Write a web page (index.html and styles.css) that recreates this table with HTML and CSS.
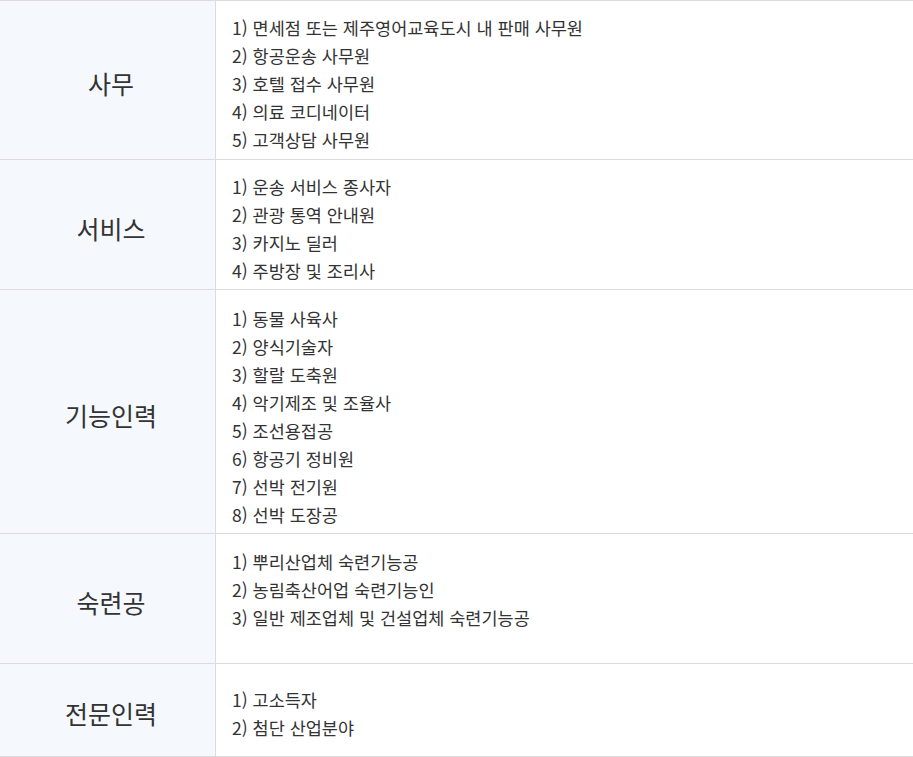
FILE: index.html
```html
<!DOCTYPE html>
<html lang="ko">
<head>
<meta charset="utf-8">
<title>직종</title>
<link rel="stylesheet" href="styles.css">
</head>
<body>
<div class="table">
  <div class="row">
    <div class="head">사무</div>
    <ul class="list list--first">
      <li>1) 면세점 또는 제주영어교육도시 내 판매 사무원</li>
      <li>2) 항공운송 사무원</li>
      <li>3) 호텔 접수 사무원</li>
      <li>4) 의료 코디네이터</li>
      <li>5) 고객상담 사무원</li>
    </ul>
  </div>
  <div class="row">
    <div class="head">서비스</div>
    <ul class="list">
      <li>1) 운송 서비스 종사자</li>
      <li>2) 관광 통역 안내원</li>
      <li>3) 카지노 딜러</li>
      <li>4) 주방장 및 조리사</li>
    </ul>
  </div>
  <div class="row">
    <div class="head">기능인력</div>
    <ul class="list list--long">
      <li>1) 동물 사육사</li>
      <li>2) 양식기술자</li>
      <li>3) 할랄 도축원</li>
      <li>4) 악기제조 및 조율사</li>
      <li>5) 조선용접공</li>
      <li>6) 항공기 정비원</li>
      <li>7) 선박 전기원</li>
      <li>8) 선박 도장공</li>
    </ul>
  </div>
  <div class="row">
    <div class="head">숙련공</div>
    <ul class="list list--spaced">
      <li>1) 뿌리산업체 숙련기능공</li>
      <li>2) 농림축산어업 숙련기능인</li>
      <li>3) 일반 제조업체 및 건설업체 숙련기능공</li>
    </ul>
  </div>
  <div class="row">
    <div class="head">전문인력</div>
    <ul class="list list--last">
      <li>1) 고소득자</li>
      <li>2) 첨단 산업분야</li>
    </ul>
  </div>
</div>
</body>
</html>
```

FILE: styles.css
```css
* { box-sizing: border-box; }
html, body {
  margin: 0;
  padding: 0;
  background: #fff;
}
body {
  font-family: "Noto Sans CJK KR", "Noto Sans", sans-serif;
  color: #333;
}
.table {
  width: 913px;
  border-top: 1px solid #dcdcdc;
}
.row {
  display: grid;
  grid-template-columns: 216px 1fr;
  border-bottom: 1px solid #dcdcdc;
}
.head {
  background: #f5f9fe;
  border-right: 1px solid #dcdcdc;
  display: flex;
  align-items: center;
  justify-content: center;
  padding: 6px 0 0 7px;
  font-size: 25px;
  color: #333;
}
.list {
  list-style: none;
  margin: 0;
  padding: 13px 0 4px 16px;
  font-size: 17.5px;
  line-height: 28px;
}
.list--first { padding-bottom: 5px; }
.list--long { padding-top: 15px; padding-bottom: 4px; }
.list--spaced { padding-top: 14px; padding-bottom: 31px; }
.list--last { padding-top: 22px; padding-bottom: 14px; }
```
